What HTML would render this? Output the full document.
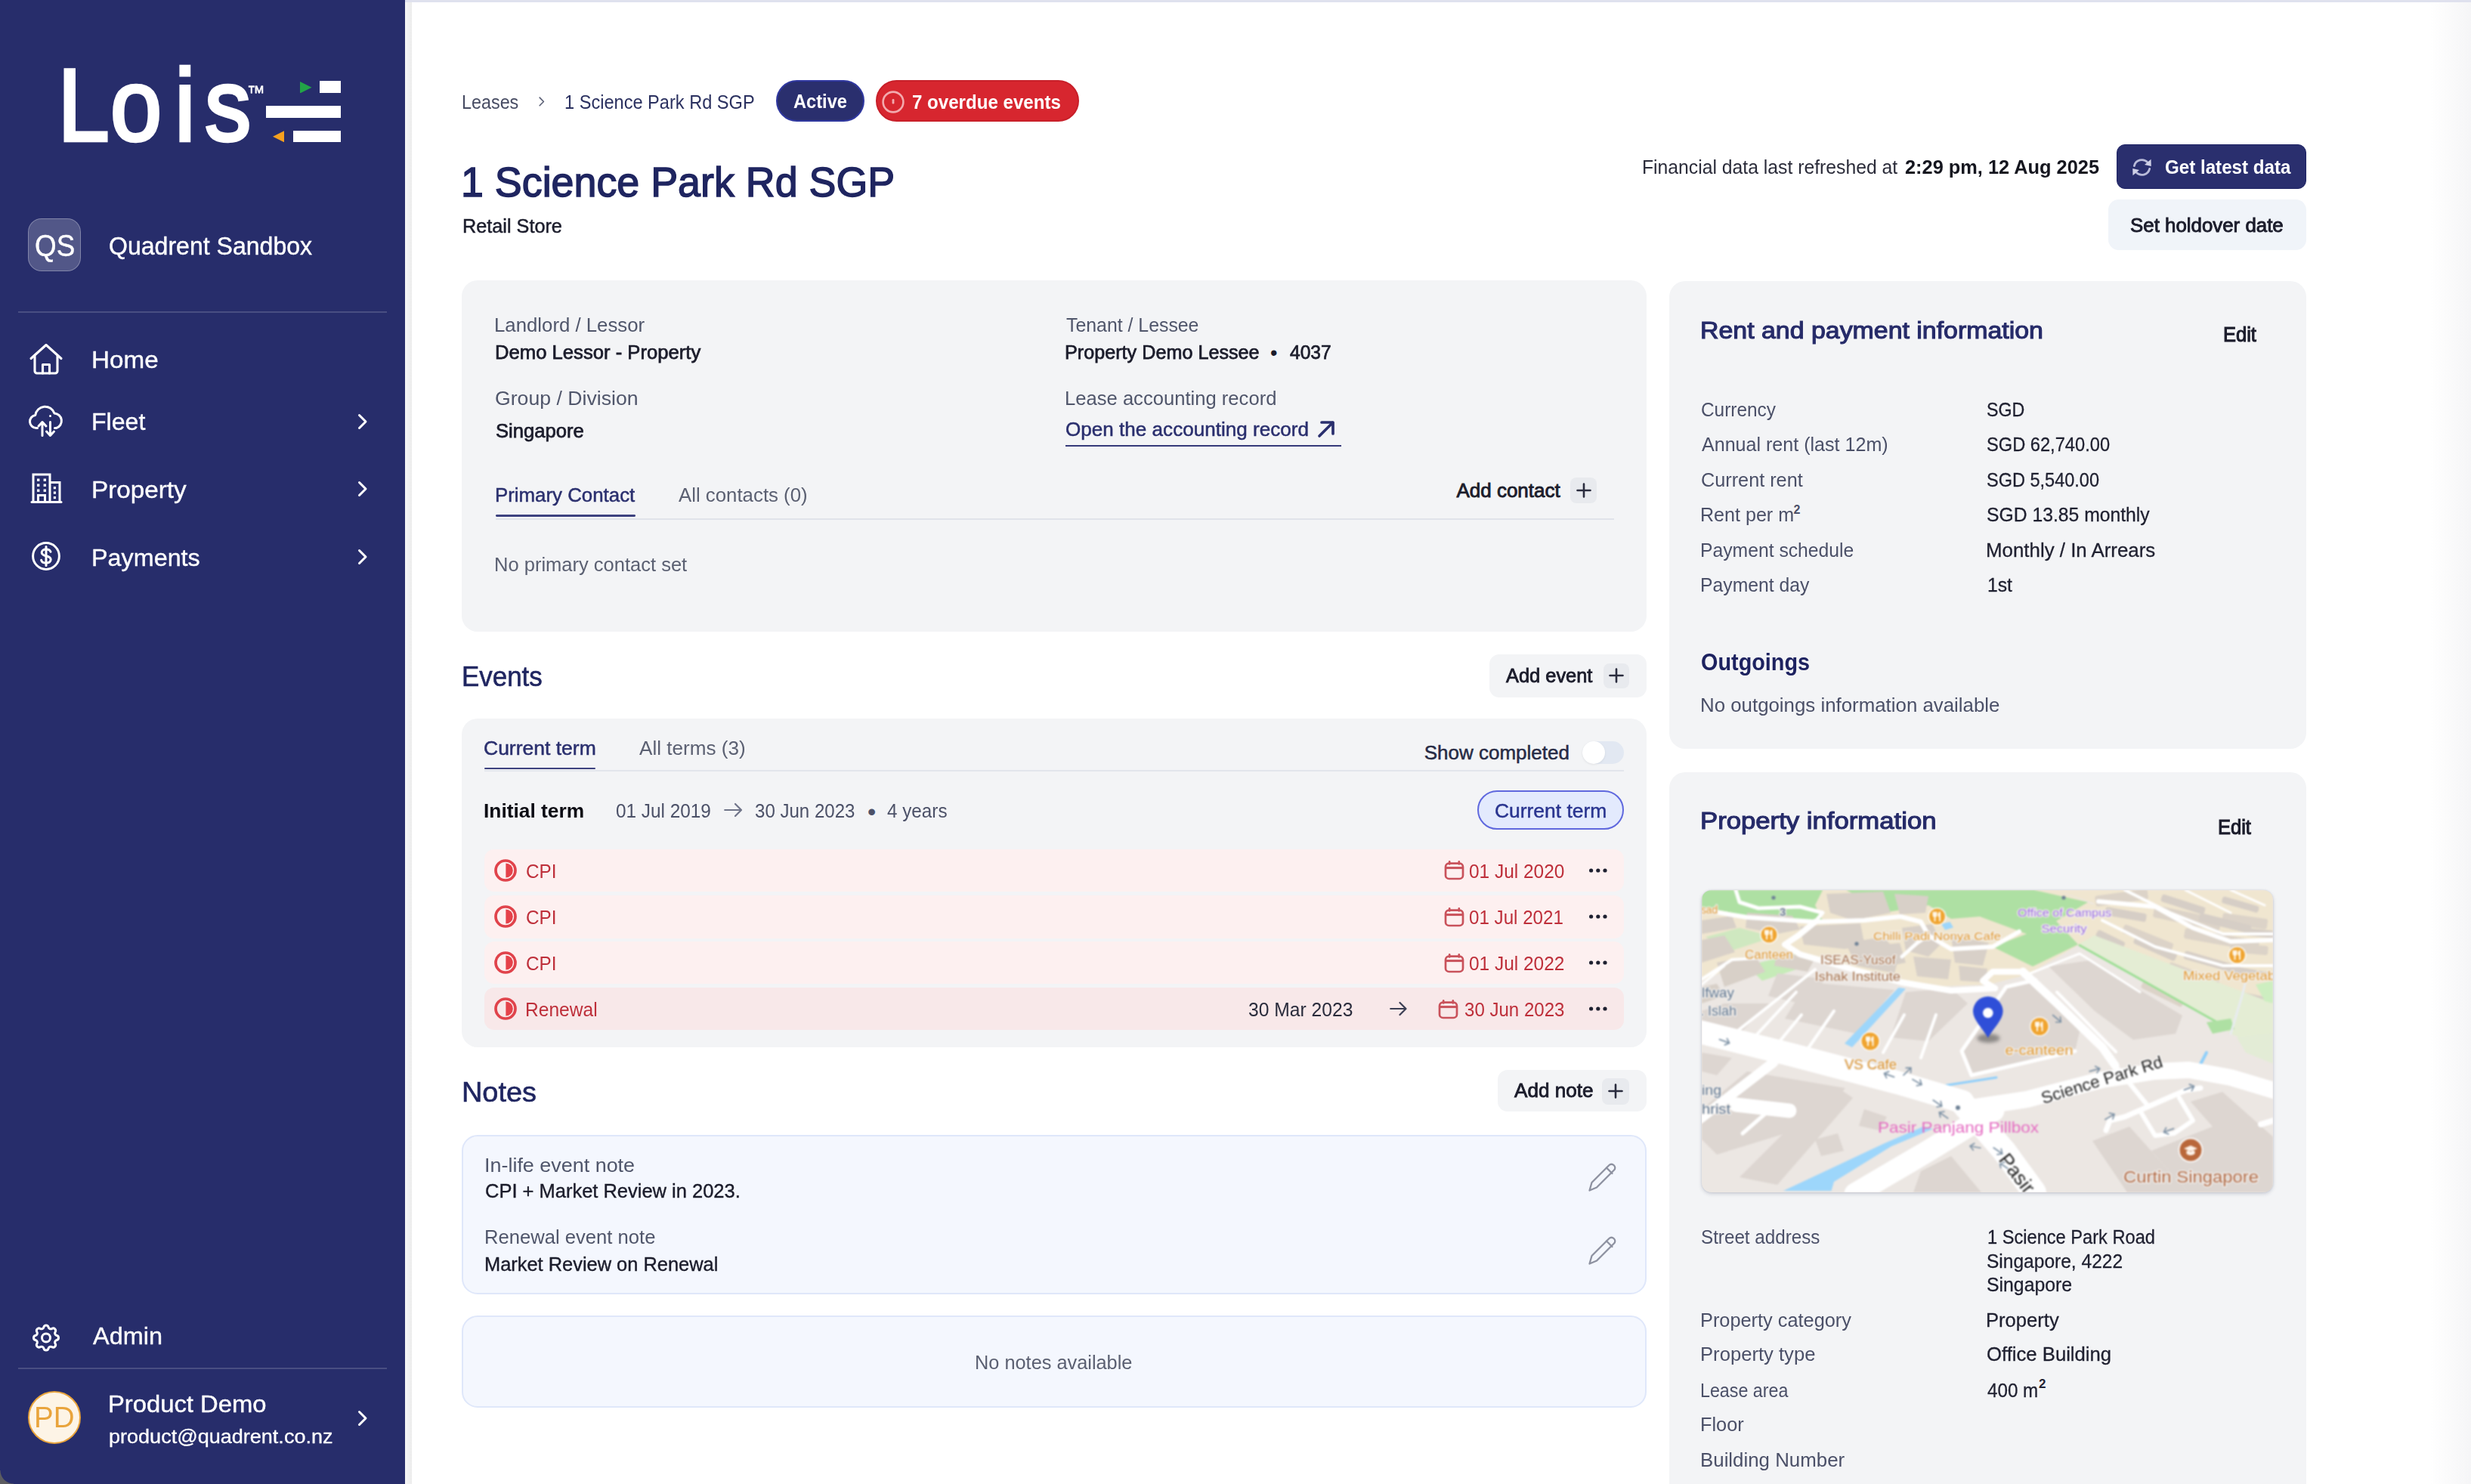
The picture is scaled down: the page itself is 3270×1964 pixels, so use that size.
<!DOCTYPE html>
<html lang="en"><head><meta charset="utf-8"><title>1 Science Park Rd SGP - Lois</title>
<style>
*{margin:0;padding:0;box-sizing:border-box}
html,body{width:3270px;height:1964px;overflow:hidden;background:#fff}
body{position:relative;font-family:"Liberation Sans",sans-serif;}
.t{position:absolute;white-space:nowrap;line-height:1;transform-origin:0 50%;display:block}
.b{position:absolute;display:block}
</style></head>
<body>
<aside>
<div class="b" style="left:0.0px;top:0.0px;width:536.0px;height:1964.0px;background:#272d6b;border-radius:0px;"></div>
<div class="b" style="left:536.0px;top:2.0px;width:8.5px;height:1962.0px;background:linear-gradient(90deg,#f6f6f6 0%,#ececec 100%);border-radius:0px;"></div>
<div class="b" style="left:536.0px;top:0.0px;width:2734.0px;height:2.5px;background:#dfe1ee;border-radius:0px;"></div>
<div class="b" style="left:3215.0px;top:2.5px;width:55.0px;height:1961.5px;background:linear-gradient(90deg,rgba(255,255,255,0) 0%,rgba(120,120,140,0.07) 100%);border-radius:0px;"></div>
<div class="b" style="left:0;top:1946px;width:18px;height:18px;background:radial-gradient(circle at 18px 0px, rgba(0,0,0,0) 17px, #5c5c60 18px)"></div>
<svg class="b" style="left:0;top:60px" width="420" height="160" viewBox="0 0 420 160"><text transform="scale(0.9 1)" x="85 162.2 257 301" y="126.5" font-family="Liberation Sans, sans-serif" font-size="136" fill="#fff" stroke="#fff" stroke-width="4.4" stroke-linejoin="miter">Lois</text></svg>
<span class="t" style="left:327.3px;top:110.0px;font-size:25px;color:#ffffff;-webkit-text-stroke:0.5px #ffffff;transform:scaleX(0.9524);">™</span>
<div class="b" style="left:423.0px;top:107.0px;width:28.0px;height:16.0px;background:#ffffff;border-radius:0px;"></div>
<div class="b" style="left:352.0px;top:140.0px;width:99.0px;height:16.0px;background:#ffffff;border-radius:0px;"></div>
<div class="b" style="left:388.0px;top:172.5px;width:63.0px;height:15.5px;background:#ffffff;border-radius:0px;"></div>
<svg class="b" style="left:397.0px;top:107.5px;" width="15.5" height="15.5" viewBox="0 0 10 10"><polygon points="0,0 10,5 0,10" fill="#22a447"/></svg>
<svg class="b" style="left:360.5px;top:172.5px;" width="15.5" height="15.5" viewBox="0 0 10 10"><polygon points="10,0 0,5 10,10" fill="#f5a01f"/></svg>
<div class="b" style="left:37.0px;top:289.0px;width:70.0px;height:70.0px;background:rgba(255,255,255,0.2);border-radius:18px;border:1.5px solid rgba(255,255,255,0.28);"></div>
<span class="t" style="left:45.9px;top:304.7px;font-size:41px;color:#ffffff;-webkit-text-stroke:0.4px #ffffff;transform:scaleX(0.8982);">QS</span>
<span class="t" style="left:144.3px;top:308.5px;font-size:33px;color:#ffffff;-webkit-text-stroke:0.4px #ffffff;transform:scaleX(0.9713);">Quadrent Sandbox</span>
<div class="b" style="left:24.0px;top:412.0px;width:488.0px;height:2.0px;background:rgba(255,255,255,0.16);border-radius:0px;"></div>
<svg class="b" style="left:38.0px;top:453.0px;" width="46.0" height="44.0" viewBox="0 0 46 44"><g fill="none" stroke="#fff" stroke-width="3.1" stroke-linecap="round" stroke-linejoin="round"><path d="M3 21.5 L23 3.5 L43 21.5"/><path d="M8 18.5 V38 a3 3 0 0 0 3 3 H35 a3 3 0 0 0 3 -3 V18.5"/><path d="M18.5 41 V29.5 H27.5 V41"/></g></svg>
<span class="t" style="left:121.1px;top:460.6px;font-size:31px;color:#ffffff;-webkit-text-stroke:0.35px #ffffff;transform:scaleX(1.0717);">Home</span>
<svg class="b" style="left:37.0px;top:535.0px;" width="48.0" height="46.0" viewBox="0 0 48 46"><g fill="none" stroke="#fff" stroke-width="3" stroke-linecap="round" stroke-linejoin="round"><path d="M12.5 31.5 H11 a8.6 8.6 0 0 1 -1.2 -17.1 a13 13 0 0 1 25.2 -2.4 a10 10 0 0 1 2.5 19.5 H35.5"/><path d="M19 41.5 V24 M14 29 L19 23.5 L24 29"/><path d="M29.5 23.5 V41 M24.5 36 L29.5 41.5 L34.5 36"/><path d="M29.5 15.5 V15.6"/></g></svg>
<span class="t" style="left:121.2px;top:542.6px;font-size:31px;color:#ffffff;-webkit-text-stroke:0.35px #ffffff;transform:scaleX(1.0348);">Fleet</span>
<svg class="b" style="left:472.0px;top:545.5px;" width="16.0" height="24.0" viewBox="0 0 16 24"><path d="M3.5 3.5 L12 12 L3.5 20.5" fill="none" stroke="#ffffff" stroke-width="3" stroke-linecap="round" stroke-linejoin="round"/></svg>
<svg class="b" style="left:39.0px;top:624.0px;" width="45.0" height="44.0" viewBox="0 0 45 44"><g fill="none" stroke="#fff" stroke-width="3" stroke-linecap="butt" stroke-linejoin="miter"><path d="M5 40 V4 H27 V40"/><path d="M27 14.5 H40 V40"/><path d="M3 40.5 H42" stroke-linecap="round"/><path d="M11.5 40 V31.5 H20.5 V40"/></g><g fill="#fff"><rect x="10" y="9.5" width="3.4" height="3.4"/><rect x="18.6" y="9.5" width="3.4" height="3.4"/><rect x="10" y="16.5" width="3.4" height="3.4"/><rect x="18.6" y="16.5" width="3.4" height="3.4"/><rect x="10" y="23.5" width="3.4" height="3.4"/><rect x="18.6" y="23.5" width="3.4" height="3.4"/><rect x="31.8" y="20" width="3.2" height="3.2"/><rect x="31.8" y="26.5" width="3.2" height="3.2"/><rect x="31.8" y="33" width="3.2" height="3.2"/></g></svg>
<span class="t" style="left:121.1px;top:632.6px;font-size:31px;color:#ffffff;-webkit-text-stroke:0.35px #ffffff;transform:scaleX(1.0734);">Property</span>
<svg class="b" style="left:472.0px;top:634.5px;" width="16.0" height="24.0" viewBox="0 0 16 24"><path d="M3.5 3.5 L12 12 L3.5 20.5" fill="none" stroke="#ffffff" stroke-width="3" stroke-linecap="round" stroke-linejoin="round"/></svg>
<svg class="b" style="left:39.0px;top:714.0px;" width="44.0" height="44.0" viewBox="0 0 44 44"><g fill="none" stroke="#fff" stroke-width="3" stroke-linecap="round" stroke-linejoin="round"><circle cx="22" cy="22" r="17.4"/><path d="M28 16.3 c-0.8 -2.2 -3 -3.3 -6 -3.3 c-3.4 0 -5.8 1.7 -5.8 4.3 c0 6 12 3 12 9.3 c0 2.8 -2.6 4.5 -6.2 4.5 c-3.3 0 -5.7 -1.3 -6.4 -3.8"/><path d="M22 9.5 V34.5"/></g></svg>
<span class="t" style="left:121.2px;top:722.6px;font-size:31px;color:#ffffff;-webkit-text-stroke:0.35px #ffffff;transform:scaleX(1.0430);">Payments</span>
<svg class="b" style="left:472.0px;top:724.5px;" width="16.0" height="24.0" viewBox="0 0 16 24"><path d="M3.5 3.5 L12 12 L3.5 20.5" fill="none" stroke="#ffffff" stroke-width="3" stroke-linecap="round" stroke-linejoin="round"/></svg>
<svg class="b" style="left:39.0px;top:1747.5px;" width="44.0" height="45.0" viewBox="0 0 24 24"><g fill="none" stroke="#fff" stroke-width="1.65" stroke-linecap="round" stroke-linejoin="round"><path d="M10.325 4.317c.426 -1.756 2.924 -1.756 3.35 0a1.724 1.724 0 0 0 2.573 1.066c1.543 -.94 3.31 .826 2.37 2.37a1.724 1.724 0 0 0 1.065 2.572c1.756 .426 1.756 2.924 0 3.35a1.724 1.724 0 0 0 -1.066 2.573c.94 1.543 -.826 3.31 -2.37 2.37a1.724 1.724 0 0 0 -2.572 1.065c-.426 1.756 -2.924 1.756 -3.35 0a1.724 1.724 0 0 0 -2.573 -1.066c-1.543 .94 -3.31 -.826 -2.37 -2.37a1.724 1.724 0 0 0 -1.065 -2.572c-1.756 -.426 -1.756 -2.924 0 -3.35a1.724 1.724 0 0 0 1.066 -2.573c-.94 -1.543 .826 -3.31 2.37 -2.37c1 .608 2.296 .07 2.572 -1.065z"/><circle cx="12" cy="12" r="3"/></g></svg>
<span class="t" style="left:123.3px;top:1752.6px;font-size:31px;color:#ffffff;-webkit-text-stroke:0.35px #ffffff;transform:scaleX(1.0464);">Admin</span>
<div class="b" style="left:24.0px;top:1810.0px;width:488.0px;height:2.0px;background:rgba(255,255,255,0.16);border-radius:0px;"></div>
<div class="b" style="left:37.0px;top:1841.0px;width:70.0px;height:70.0px;background:#fdf4e6;border-radius:35px;border:2.5px solid #e9a43c;"></div>
<span class="t" style="left:44.5px;top:1857.3px;font-size:38px;color:#e9a43c;transform:scaleX(1.0135);">PD</span>
<span class="t" style="left:142.8px;top:1841.9px;font-size:32px;color:#ffffff;-webkit-text-stroke:0.4px #ffffff;transform:scaleX(1.0241);">Product Demo</span>
<span class="t" style="left:143.7px;top:1888.1px;font-size:26.5px;color:#ffffff;-webkit-text-stroke:0.3px #ffffff;transform:scaleX(1.0203);">product@quadrent.co.nz</span>
<svg class="b" style="left:472.0px;top:1864.5px;" width="16.0" height="24.0" viewBox="0 0 16 24"><path d="M3.5 3.5 L12 12 L3.5 20.5" fill="none" stroke="#ffffff" stroke-width="3" stroke-linecap="round" stroke-linejoin="round"/></svg>
</aside>
<main>
<section>
<span class="t" style="left:611.4px;top:121.5px;font-size:26px;color:#474c63;transform:scaleX(0.8981);">Leases</span>
<svg class="b" style="left:711.5px;top:127.1px;" width="9.9" height="14.9" viewBox="0 0 16 24"><path d="M3.5 3.5 L12 12 L3.5 20.5" fill="none" stroke="#5a5f75" stroke-width="2.6" stroke-linecap="round" stroke-linejoin="round"/></svg>
<span class="t" style="left:746.6px;top:121.5px;font-size:26px;color:#2b3160;transform:scaleX(0.9069);">1 Science Park Rd SGP</span>
<div class="b" style="left:1026.5px;top:105.5px;width:117.0px;height:55.5px;background:#2a2f6e;border-radius:28px;border:2px solid #3038a0;"></div>
<span class="t" style="left:1050.0px;top:120.5px;font-size:26px;color:#fff;font-weight:700;transform:scaleX(0.9088);">Active</span>
<div class="b" style="left:1159.0px;top:105.5px;width:268.5px;height:55.5px;background:#d7262f;border-radius:28px;border:2px solid #c81f29;"></div>
<svg class="b" style="left:1166.0px;top:119.0px;" width="32.0" height="32.0" viewBox="0 0 32 32"><circle cx="16" cy="16" r="13.4" fill="none" stroke="#f3a9ad" stroke-width="2.6"/><rect x="14.6" y="12" width="2.8" height="6.5" rx="1.2" fill="#f3a9ad"/></svg>
<span class="t" style="left:1207.1px;top:121.5px;font-size:26px;color:#fff;font-weight:700;transform:scaleX(0.9267);">7 overdue events</span>
<span class="t" style="left:610.3px;top:213.1px;font-size:56px;color:#1f2560;-webkit-text-stroke:1.5px #1f2560;transform:scaleX(0.9607);">1 Science Park Rd SGP</span>
<span class="t" style="left:611.5px;top:286.0px;font-size:26px;color:#1b1c2b;-webkit-text-stroke:0.5px #1b1c2b;transform:scaleX(0.9709);">Retail Store</span>
<span class="t" style="left:2172.6px;top:208.0px;font-size:26px;color:#2b2c3a;transform:scaleX(0.9511);">Financial data last refreshed at</span>
<span class="t" style="left:2520.5px;top:208.0px;font-size:26px;color:#15161f;font-weight:700;transform:scaleX(0.9754);">2:29 pm, 12 Aug 2025</span>
<div class="b" style="left:2801.0px;top:191.0px;width:250.5px;height:58.5px;background:#2a2f6e;border-radius:11px;border:1.5px solid #1d2264;"></div>
<svg class="b" style="left:2820.5px;top:208.0px;" width="27.0" height="27.0" viewBox="0 0 26 26"><g fill="none" stroke="#b9bbd9" stroke-width="2.7" stroke-linecap="round"><path d="M3.2 11.2 A10 10 0 0 1 20.2 6.6"/><path d="M22.8 14.8 A10 10 0 0 1 5.8 19.4"/></g><polygon points="24.6,2.6 24.8,11.6 16.4,9.6" fill="#cfd0e6"/><polygon points="1.4,23.4 1.2,14.4 9.6,16.4" fill="#cfd0e6"/></svg>
<span class="t" style="left:2865.1px;top:208.0px;font-size:26px;color:#fff;font-weight:700;transform:scaleX(0.9289);">Get latest data</span>
<div class="b" style="left:2790.0px;top:263.5px;width:261.5px;height:67.0px;background:#f0f4f9;border-radius:14px;"></div>
<span class="t" style="left:2819.0px;top:285.0px;font-size:26.5px;color:#1b1c2b;-webkit-text-stroke:0.95px #1b1c2b;transform:scaleX(0.9760);">Set holdover date</span>
<div class="b" style="left:611.0px;top:371.0px;width:1567.5px;height:465.0px;background:#f3f4f6;border-radius:21px;"></div>
<span class="t" style="left:654.2px;top:417.0px;font-size:26px;color:#50566b;transform:scaleX(0.9912);">Landlord / Lessor</span>
<span class="t" style="left:654.6px;top:453.0px;font-size:26px;color:#1b1c2b;-webkit-text-stroke:0.75px #1b1c2b;transform:scaleX(0.9864);">Demo Lessor - Property</span>
<span class="t" style="left:655.2px;top:514.0px;font-size:26px;color:#50566b;transform:scaleX(1.0247);">Group / Division</span>
<span class="t" style="left:655.6px;top:557.0px;font-size:26px;color:#1b1c2b;-webkit-text-stroke:0.75px #1b1c2b;transform:scaleX(0.9844);">Singapore</span>
<span class="t" style="left:1410.5px;top:417.0px;font-size:26px;color:#50566b;transform:scaleX(0.9557);">Tenant / Lessee</span>
<span class="t" style="left:1408.9px;top:453.0px;font-size:26px;color:#1b1c2b;-webkit-text-stroke:0.75px #1b1c2b;transform:scaleX(0.9689);">Property Demo Lessee</span>
<span class="t" style="left:1681.0px;top:454.1px;font-size:27px;color:#1b1c2b;">•</span>
<span class="t" style="left:1706.9px;top:453.0px;font-size:26px;color:#1b1c2b;-webkit-text-stroke:0.75px #1b1c2b;transform:scaleX(0.9455);">4037</span>
<span class="t" style="left:1408.5px;top:514.0px;font-size:26px;color:#50566b;transform:scaleX(0.9848);">Lease accounting record</span>
<span class="t" style="left:1409.7px;top:555.0px;font-size:26px;color:#2a2f6e;-webkit-text-stroke:0.5px #2a2f6e;transform:scaleX(1.0034);">Open the accounting record</span>
<svg class="b" style="left:1742.0px;top:555.0px;" width="26.0" height="26.0" viewBox="0 0 26 26"><g fill="none" stroke="#2a2f6e" stroke-width="3.7" stroke-linecap="round" stroke-linejoin="round"><path d="M4 22 L21.5 4.5"/><path d="M7 4 H22 V19"/></g></svg>
<div class="b" style="left:1410.0px;top:589.0px;width:365.0px;height:2.4px;background:#353a7a;border-radius:0px;"></div>
<span class="t" style="left:654.5px;top:642.0px;font-size:26px;color:#2a2f6e;-webkit-text-stroke:0.5px #2a2f6e;transform:scaleX(0.9938);">Primary Contact</span>
<div class="b" style="left:655.5px;top:681.2px;width:185.0px;height:2.8px;background:#3d427f;border-radius:1.4px;"></div>
<span class="t" style="left:898.0px;top:642.0px;font-size:26px;color:#5b6072;transform:scaleX(0.9925);">All contacts (0)</span>
<div class="b" style="left:655.5px;top:685.5px;width:1480.5px;height:2.3px;background:#e0e3ea;border-radius:0px;"></div>
<span class="t" style="left:1927.4px;top:636.0px;font-size:26px;color:#1b1c2b;-webkit-text-stroke:0.85px #1b1c2b;">Add contact</span>
<div class="b" style="left:2078.0px;top:632.0px;width:35.0px;height:34.0px;background:#e8eaee;border-radius:8px;"></div>
<svg class="b" style="left:2085.5px;top:639.0px;" width="20.0" height="20.0" viewBox="0 0 20 20"><path d="M10 1.5 V18.5 M1.5 10 H18.5" stroke="#2a2c3e" stroke-width="2.6" stroke-linecap="round"/></svg>
<span class="t" style="left:654.2px;top:734.0px;font-size:26px;color:#5b6072;transform:scaleX(0.9812);">No primary contact set</span>
<span class="t" style="left:610.9px;top:876.7px;font-size:37px;color:#1f2560;-webkit-text-stroke:0.6px #1f2560;transform:scaleX(0.9433);">Events</span>
<div class="b" style="left:1970.5px;top:866.0px;width:208.0px;height:57.0px;background:#f3f4f6;border-radius:13px;"></div>
<span class="t" style="left:1993.4px;top:881.0px;font-size:26px;color:#1b1c2b;-webkit-text-stroke:0.85px #1b1c2b;transform:scaleX(0.9770);">Add event</span>
<div class="b" style="left:2121.5px;top:877.5px;width:34.5px;height:33.5px;background:#e8eaee;border-radius:8px;"></div>
<svg class="b" style="left:2128.8px;top:884.2px;" width="20.0" height="20.0" viewBox="0 0 20 20"><path d="M10 1.5 V18.5 M1.5 10 H18.5" stroke="#2a2c3e" stroke-width="2.6" stroke-linecap="round"/></svg>
<div class="b" style="left:611.0px;top:951.0px;width:1567.5px;height:435.0px;background:#f3f4f6;border-radius:21px;"></div>
<span class="t" style="left:639.7px;top:976.5px;font-size:26px;color:#2a2f6e;-webkit-text-stroke:0.5px #2a2f6e;transform:scaleX(1.0191);">Current term</span>
<div class="b" style="left:640.5px;top:1015.7px;width:147.0px;height:2.8px;background:#3d427f;border-radius:1.4px;"></div>
<span class="t" style="left:846.0px;top:976.5px;font-size:26px;color:#5b6072;transform:scaleX(1.0039);">All terms (3)</span>
<div class="b" style="left:640.5px;top:1018.5px;width:1508.5px;height:2.0px;background:#e2e5ec;border-radius:0px;"></div>
<span class="t" style="left:1884.7px;top:983.0px;font-size:26px;color:#272b45;-webkit-text-stroke:0.5px #272b45;">Show completed</span>
<div class="b" style="left:2094.0px;top:981.0px;width:55.0px;height:30.0px;background:#e2e8f2;border-radius:16px;"></div>
<div class="b" style="left:2094.0px;top:980.5px;width:30.0px;height:30.0px;background:#ffffff;border-radius:15px;box-shadow:0 1px 3px rgba(0,0,0,0.08);"></div>
<span class="t" style="left:639.5px;top:1059.5px;font-size:26px;color:#0c0c14;font-weight:700;transform:scaleX(1.0127);">Initial term</span>
<span class="t" style="left:814.6px;top:1059.5px;font-size:26px;color:#4c5168;transform:scaleX(0.9362);">01 Jul 2019</span>
<svg class="b" style="left:958.0px;top:1061.5px;" width="24.5" height="20.0" viewBox="0 0 24.5 20"><path d="M1.2 10 H22.9 M15.0 2 L23.0 10 L15.0 18" fill="none" stroke="#6f7489" stroke-width="2.2" stroke-linecap="round" stroke-linejoin="round"/></svg>
<span class="t" style="left:999.0px;top:1059.5px;font-size:26px;color:#4c5168;transform:scaleX(0.9252);">30 Jun 2023</span>
<span class="t" style="left:1148.0px;top:1058.4px;font-size:32px;color:#4c5168;">•</span>
<span class="t" style="left:1174.0px;top:1059.5px;font-size:26px;color:#4c5168;transform:scaleX(0.9324);">4 years</span>
<div class="b" style="left:1955.0px;top:1046.0px;width:194.0px;height:51.5px;background:#e3eafd;border-radius:26px;border:2.6px solid #5f68de;"></div>
<span class="t" style="left:1978.2px;top:1059.5px;font-size:26px;color:#29348f;-webkit-text-stroke:0.45px #29348f;transform:scaleX(1.0160);">Current term</span>
<div class="b" style="left:640.5px;top:1123.5px;width:1508.5px;height:56.5px;background:#fdf0f0;border-radius:13px;"></div>
<svg class="b" style="left:652.5px;top:1135.8px;" width="32.0" height="32.0" viewBox="0 0 32 32"><circle cx="16" cy="16" r="13" fill="none" stroke="#e0434b" stroke-width="3.7"/><path d="M16.4 6.6 A9.4 9.4 0 0 1 16.4 25.4 Z" fill="#e5424a"/></svg>
<span class="t" style="left:696.1px;top:1139.5px;font-size:26px;color:#be2f3a;transform:scaleX(0.9347);">CPI</span>
<svg class="b" style="left:1911.0px;top:1139.2px;" width="27.0" height="26.0" viewBox="0 0 27 26"><g fill="none" stroke="#c9525b" stroke-width="2.7" stroke-linejoin="round"><rect x="2" y="3.6" width="23" height="20.4" rx="4.6"/><path d="M2 9.6 H25" stroke-width="3"/><path d="M7.2 1.4 V4.5 M19.8 1.4 V4.5" stroke-linecap="round"/></g></svg>
<span class="t" style="left:1944.1px;top:1139.5px;font-size:26px;color:#be2f3a;transform:scaleX(0.9400);">01 Jul 2020</span>
<svg class="b" style="left:2101.5px;top:1147.8px;" width="26.0" height="8.0" viewBox="0 0 26 8"><circle cx="3.6" cy="4" r="2.6" fill="#1e2030"/><circle cx="12.8" cy="4" r="2.6" fill="#1e2030"/><circle cx="22" cy="4" r="2.6" fill="#1e2030"/></svg>
<div class="b" style="left:640.5px;top:1184.5px;width:1508.5px;height:57.0px;background:#fdf0f0;border-radius:13px;"></div>
<svg class="b" style="left:652.5px;top:1197.0px;" width="32.0" height="32.0" viewBox="0 0 32 32"><circle cx="16" cy="16" r="13" fill="none" stroke="#e0434b" stroke-width="3.7"/><path d="M16.4 6.6 A9.4 9.4 0 0 1 16.4 25.4 Z" fill="#e5424a"/></svg>
<span class="t" style="left:696.1px;top:1200.8px;font-size:26px;color:#be2f3a;transform:scaleX(0.9347);">CPI</span>
<svg class="b" style="left:1911.0px;top:1200.5px;" width="27.0" height="26.0" viewBox="0 0 27 26"><g fill="none" stroke="#c9525b" stroke-width="2.7" stroke-linejoin="round"><rect x="2" y="3.6" width="23" height="20.4" rx="4.6"/><path d="M2 9.6 H25" stroke-width="3"/><path d="M7.2 1.4 V4.5 M19.8 1.4 V4.5" stroke-linecap="round"/></g></svg>
<span class="t" style="left:1944.1px;top:1200.8px;font-size:26px;color:#be2f3a;transform:scaleX(0.9287);">01 Jul 2021</span>
<svg class="b" style="left:2101.5px;top:1209.0px;" width="26.0" height="8.0" viewBox="0 0 26 8"><circle cx="3.6" cy="4" r="2.6" fill="#1e2030"/><circle cx="12.8" cy="4" r="2.6" fill="#1e2030"/><circle cx="22" cy="4" r="2.6" fill="#1e2030"/></svg>
<div class="b" style="left:640.5px;top:1246.0px;width:1508.5px;height:56.0px;background:#fdf0f0;border-radius:13px;"></div>
<svg class="b" style="left:652.5px;top:1258.0px;" width="32.0" height="32.0" viewBox="0 0 32 32"><circle cx="16" cy="16" r="13" fill="none" stroke="#e0434b" stroke-width="3.7"/><path d="M16.4 6.6 A9.4 9.4 0 0 1 16.4 25.4 Z" fill="#e5424a"/></svg>
<span class="t" style="left:696.1px;top:1261.8px;font-size:26px;color:#be2f3a;transform:scaleX(0.9347);">CPI</span>
<svg class="b" style="left:1911.0px;top:1261.5px;" width="27.0" height="26.0" viewBox="0 0 27 26"><g fill="none" stroke="#c9525b" stroke-width="2.7" stroke-linejoin="round"><rect x="2" y="3.6" width="23" height="20.4" rx="4.6"/><path d="M2 9.6 H25" stroke-width="3"/><path d="M7.2 1.4 V4.5 M19.8 1.4 V4.5" stroke-linecap="round"/></g></svg>
<span class="t" style="left:1944.1px;top:1261.8px;font-size:26px;color:#be2f3a;transform:scaleX(0.9400);">01 Jul 2022</span>
<svg class="b" style="left:2101.5px;top:1270.0px;" width="26.0" height="8.0" viewBox="0 0 26 8"><circle cx="3.6" cy="4" r="2.6" fill="#1e2030"/><circle cx="12.8" cy="4" r="2.6" fill="#1e2030"/><circle cx="22" cy="4" r="2.6" fill="#1e2030"/></svg>
<div class="b" style="left:640.5px;top:1307.0px;width:1508.5px;height:56.0px;background:#f8e8e9;border-radius:13px;"></div>
<svg class="b" style="left:652.5px;top:1319.0px;" width="32.0" height="32.0" viewBox="0 0 32 32"><circle cx="16" cy="16" r="13" fill="none" stroke="#e0434b" stroke-width="3.7"/><path d="M16.4 6.6 A9.4 9.4 0 0 1 16.4 25.4 Z" fill="#e5424a"/></svg>
<span class="t" style="left:695.1px;top:1322.8px;font-size:26px;color:#be2f3a;transform:scaleX(0.9452);">Renewal</span>
<svg class="b" style="left:1903.0px;top:1322.5px;" width="27.0" height="26.0" viewBox="0 0 27 26"><g fill="none" stroke="#c9525b" stroke-width="2.7" stroke-linejoin="round"><rect x="2" y="3.6" width="23" height="20.4" rx="4.6"/><path d="M2 9.6 H25" stroke-width="3"/><path d="M7.2 1.4 V4.5 M19.8 1.4 V4.5" stroke-linecap="round"/></g></svg>
<span class="t" style="left:1937.5px;top:1322.8px;font-size:26px;color:#be2f3a;transform:scaleX(0.9252);">30 Jun 2023</span>
<svg class="b" style="left:2101.5px;top:1331.0px;" width="26.0" height="8.0" viewBox="0 0 26 8"><circle cx="3.6" cy="4" r="2.6" fill="#1e2030"/><circle cx="12.8" cy="4" r="2.6" fill="#1e2030"/><circle cx="22" cy="4" r="2.6" fill="#1e2030"/></svg>
<span class="t" style="left:1652.0px;top:1322.9px;font-size:26px;color:#2a2c3c;transform:scaleX(0.9483);">30 Mar 2023</span>
<svg class="b" style="left:1838.5px;top:1325.0px;" width="23.0" height="20.0" viewBox="0 0 23.0 20"><path d="M1.2 10 H21.4 M13.5 2 L21.5 10 L13.5 18" fill="none" stroke="#3a3d52" stroke-width="2.2" stroke-linecap="round" stroke-linejoin="round"/></svg>
<span class="t" style="left:610.6px;top:1426.7px;font-size:37px;color:#1f2560;-webkit-text-stroke:0.6px #1f2560;transform:scaleX(1.0241);">Notes</span>
<div class="b" style="left:1982.0px;top:1416.0px;width:196.5px;height:55.0px;background:#f3f4f6;border-radius:13px;"></div>
<span class="t" style="left:2004.4px;top:1430.0px;font-size:26px;color:#1b1c2b;-webkit-text-stroke:0.85px #1b1c2b;transform:scaleX(1.0050);">Add note</span>
<div class="b" style="left:2120.0px;top:1427.0px;width:36.0px;height:34.5px;background:#e8eaee;border-radius:8px;"></div>
<svg class="b" style="left:2128.0px;top:1434.2px;" width="20.0" height="20.0" viewBox="0 0 20 20"><path d="M10 1.5 V18.5 M1.5 10 H18.5" stroke="#2a2c3e" stroke-width="2.6" stroke-linecap="round"/></svg>
<div class="b" style="left:611.0px;top:1501.5px;width:1567.5px;height:211.0px;background:#f4f7fe;border-radius:21px;border:2px solid #dfe7fa;"></div>
<span class="t" style="left:641.0px;top:1528.8px;font-size:26px;color:#50566b;transform:scaleX(1.0355);">In-life event note</span>
<span class="t" style="left:642.3px;top:1562.8px;font-size:26px;color:#1b1c2b;-webkit-text-stroke:0.4px #1b1c2b;transform:scaleX(0.9800);">CPI + Market Review in 2023.</span>
<span class="t" style="left:641.1px;top:1623.6px;font-size:26px;color:#50566b;transform:scaleX(0.9852);">Renewal event note</span>
<span class="t" style="left:641.3px;top:1659.6px;font-size:26px;color:#1b1c2b;-webkit-text-stroke:0.4px #1b1c2b;transform:scaleX(0.9774);">Market Review on Renewal</span>
<svg class="b" style="left:2098.5px;top:1538.0px;" width="42.0" height="42.0" viewBox="0 0 42 42"><g fill="none" stroke="#8d91a0" stroke-width="2.3" stroke-linecap="round" stroke-linejoin="round"><path d="M4.5 37.5 L7.5 27 L30.5 4 a4.2 4.2 0 0 1 6 0 l0.5 0.5 a4.2 4.2 0 0 1 0 6 L14 33.5 Z"/><path d="M27 7.5 L34.5 15"/></g></svg>
<svg class="b" style="left:2098.5px;top:1635.0px;" width="42.0" height="42.0" viewBox="0 0 42 42"><g fill="none" stroke="#8d91a0" stroke-width="2.3" stroke-linecap="round" stroke-linejoin="round"><path d="M4.5 37.5 L7.5 27 L30.5 4 a4.2 4.2 0 0 1 6 0 l0.5 0.5 a4.2 4.2 0 0 1 0 6 L14 33.5 Z"/><path d="M27 7.5 L34.5 15"/></g></svg>
<div class="b" style="left:611.0px;top:1741.0px;width:1567.5px;height:122.0px;background:#f4f7fe;border-radius:21px;border:2px solid #dfe7fa;"></div>
<span class="t" style="left:1290.1px;top:1790.0px;font-size:26px;color:#5b6072;transform:scaleX(0.9742);">No notes available</span>
</section>
<section>
<div class="b" style="left:2208.5px;top:371.5px;width:843.0px;height:619.5px;background:#f3f4f6;border-radius:21px;"></div>
<span class="t" style="left:2250.4px;top:421.8px;font-size:31px;color:#262b69;-webkit-text-stroke:1.1px #262b69;transform:scaleX(1.0931);">Rent and payment information</span>
<span class="t" style="left:2941.7px;top:429.2px;font-size:27.5px;color:#1b1c2b;-webkit-text-stroke:1.1px #1b1c2b;transform:scaleX(0.9269);">Edit</span>
<span class="t" style="left:2250.6px;top:528.9px;font-size:26px;color:#4b5068;transform:scaleX(0.9380);">Currency</span>
<span class="t" style="left:2628.7px;top:528.9px;font-size:26px;color:#1f2030;-webkit-text-stroke:0.3px #1f2030;transform:scaleX(0.8925);">SGD</span>
<span class="t" style="left:2251.5px;top:575.4px;font-size:26px;color:#4b5068;transform:scaleX(0.9642);">Annual rent (last 12m)</span>
<span class="t" style="left:2628.6px;top:575.4px;font-size:26px;color:#1f2030;-webkit-text-stroke:0.3px #1f2030;transform:scaleX(0.9096);">SGD 62,740.00</span>
<span class="t" style="left:2250.5px;top:621.9px;font-size:26px;color:#4b5068;transform:scaleX(0.9711);">Current rent</span>
<span class="t" style="left:2628.6px;top:621.9px;font-size:26px;color:#1f2030;-webkit-text-stroke:0.3px #1f2030;transform:scaleX(0.9044);">SGD 5,540.00</span>
<span class="t" style="left:2249.6px;top:668.4px;font-size:26px;color:#4b5068;transform:scaleX(0.9644);">Rent per m</span>
<span class="t" style="left:2628.6px;top:668.4px;font-size:26px;color:#1f2030;-webkit-text-stroke:0.3px #1f2030;transform:scaleX(0.9505);">SGD 13.85 monthly</span>
<span class="t" style="left:2249.6px;top:714.9px;font-size:26px;color:#4b5068;transform:scaleX(0.9506);">Payment schedule</span>
<span class="t" style="left:2627.6px;top:714.9px;font-size:26px;color:#1f2030;-webkit-text-stroke:0.3px #1f2030;transform:scaleX(0.9949);">Monthly / In Arrears</span>
<span class="t" style="left:2249.6px;top:761.4px;font-size:26px;color:#4b5068;transform:scaleX(0.9516);">Payment day</span>
<span class="t" style="left:2630.0px;top:761.4px;font-size:26px;color:#1f2030;-webkit-text-stroke:0.3px #1f2030;transform:scaleX(0.9489);">1st</span>
<span class="t" style="left:2373.6px;top:666.5px;font-size:16px;color:#4b5068;font-weight:700;">2</span>
<span class="t" style="left:2250.5px;top:860.8px;font-size:31px;color:#1d2260;font-weight:700;transform:scaleX(0.9298);">Outgoings</span>
<span class="t" style="left:2249.5px;top:920.0px;font-size:26px;color:#4b5068;transform:scaleX(0.9938);">No outgoings information available</span>
<div class="b" style="left:2208.5px;top:1021.5px;width:843.0px;height:978.5px;background:#f3f4f6;border-radius:21px;"></div>
<span class="t" style="left:2250.3px;top:1071.3px;font-size:31px;color:#262b69;-webkit-text-stroke:1.1px #262b69;transform:scaleX(1.1197);">Property information</span>
<span class="t" style="left:2934.7px;top:1080.7px;font-size:27.5px;color:#1b1c2b;-webkit-text-stroke:1.1px #1b1c2b;transform:scaleX(0.9269);">Edit</span>
<div class="b" style="left:2251.5px;top:1177.8px;width:756.5px;height:400px;border-radius:13px;overflow:hidden;box-shadow:0 2px 5px rgba(60,70,100,0.22),0 0 2px rgba(60,70,100,0.15);background:#ece7e3"><svg width="756.5" height="400" viewBox="0 0 756.5 400" font-family="Liberation Sans, sans-serif" style="display:block;filter:blur(0.9px)"><defs><filter id="bl" x="-50%" y="-50%" width="200%" height="200%"><feGaussianBlur stdDeviation="2.2"/></filter></defs><rect width="756.5" height="400" fill="#ece7e3"/><polygon points="0.0,0.0 470.0,0.0 520.0,20.0 470.0,45.0 500.0,72.0 430.0,112.0 380.0,125.0 300.0,128.0 250.0,118.0 200.0,105.0 120.0,80.0 60.0,95.0 0.0,120.0" fill="#f0e6d0" /><polygon points="470.0,0.0 756.5,0.0 756.5,200.0 700.0,185.0 500.0,72.0 470.0,45.0 520.0,18.0" fill="#f0e6d0" /><rect x="520" y="8" width="70" height="14" fill="#dcd3c8" transform="rotate(-8 520 8)" rx="3"/><rect x="600" y="20" width="90" height="16" fill="#dcd3c8" transform="rotate(12 600 20)" rx="3"/><rect x="640" y="50" width="100" height="14" fill="#dcd3c8" transform="rotate(10 640 50)" rx="3"/><rect x="560" y="45" width="70" height="12" fill="#dcd3c8" transform="rotate(22 560 45)" rx="3"/><rect x="540" y="75" width="80" height="13" fill="#dcd3c8" transform="rotate(24 540 75)" rx="3"/><rect x="620" y="95" width="70" height="12" fill="#dcd3c8" transform="rotate(20 620 95)" rx="3"/><rect x="690" y="30" width="60" height="14" fill="#dcd3c8" transform="rotate(8 690 30)" rx="3"/><rect x="700" y="70" width="50" height="12" fill="#dcd3c8" transform="rotate(5 700 70)" rx="3"/><rect x="585" y="120" width="60" height="10" fill="#dcd3c8" transform="rotate(26 585 120)" rx="3"/><rect x="535" y="22" width="55" height="11" fill="#d6cec6" transform="rotate(10 535 22)" rx="3"/><rect x="610" y="5" width="60" height="10" fill="#d6cec6" transform="rotate(18 610 5)" rx="3"/><rect x="660" y="30" width="70" height="11" fill="#d6cec6" transform="rotate(14 660 30)" rx="3"/><rect x="720" y="50" width="40" height="10" fill="#d6cec6" transform="rotate(6 720 50)" rx="3"/><rect x="575" y="60" width="60" height="11" fill="#d6cec6" transform="rotate(24 575 60)" rx="3"/><rect x="640" y="80" width="70" height="11" fill="#d6cec6" transform="rotate(16 640 80)" rx="3"/><rect x="700" y="100" width="55" height="11" fill="#d6cec6" transform="rotate(10 700 100)" rx="3"/><rect x="525" y="52" width="40" height="10" fill="#d6cec6" transform="rotate(26 525 52)" rx="3"/><rect x="610" y="108" width="55" height="10" fill="#d6cec6" transform="rotate(24 610 108)" rx="3"/><rect x="665" y="128" width="60" height="10" fill="#d6cec6" transform="rotate(20 665 128)" rx="3"/><rect x="715" y="135" width="40" height="10" fill="#d6cec6" transform="rotate(12 715 135)" rx="3"/><rect x="560" y="92" width="45" height="10" fill="#d6cec6" transform="rotate(28 560 92)" rx="3"/><rect x="690" y="8" width="50" height="9" fill="#d6cec6" transform="rotate(16 690 8)" rx="3"/><polygon points="498.0,72.0 520.0,60.0 756.5,150.0 756.5,215.0 700.0,190.0 684.0,176.0" fill="#e4edd4" /><polygon points="733.0,125.0 756.5,120.0 756.5,150.0 745.0,147.0" fill="#cdeec0" /><polygon points="708.0,195.0 756.5,189.0 756.5,230.0 720.0,215.0" fill="#e3ecd6" /><path d="M500.0 73.0 L684.0 176.0" fill="none" stroke="#9fdf97" stroke-width="3" stroke-linecap="round" stroke-linejoin="round" /><polygon points="668.0,175.0 700.0,170.0 705.0,184.0 676.0,190.0" fill="#aee0a3" /><polygon points="0.0,0.0 160.0,0.0 150.0,20.0 160.0,40.0 90.0,42.0 40.0,30.0 0.0,22.0" fill="#aee0a3" /><polygon points="60.0,100.0 125.0,84.0 140.0,100.0 80.0,120.0" fill="#c6ebb8" /><polygon points="5.0,62.0 50.0,50.0 95.0,62.0 40.0,80.0" fill="#cfe8c0" /><polygon points="191.0,0.0 440.0,0.0 511.0,16.0 469.0,41.0 498.0,72.0 438.0,101.0 385.0,75.0 430.0,58.0 368.0,35.0 330.0,38.0 300.0,20.0 240.0,30.0 215.0,12.0" fill="#aee0a3" /><polygon points="165.0,5.0 240.0,2.0 250.0,30.0 200.0,40.0 170.0,30.0" fill="#d8d0c8" /><polygon points="130.0,48.0 210.0,44.0 215.0,70.0 190.0,78.0 135.0,72.0" fill="#d8d0c8" /><polygon points="190.0,70.0 240.0,62.0 262.0,85.0 255.0,110.0 205.0,100.0" fill="#d8d0c8" /><polygon points="265.0,50.0 305.0,45.0 318.0,70.0 300.0,88.0 270.0,80.0" fill="#d8d0c8" /><polygon points="330.0,60.0 380.0,70.0 372.0,100.0 335.0,96.0" fill="#d8d0c8" /><polygon points="0.0,40.0 40.0,34.0 46.0,50.0 0.0,58.0" fill="#d8d0c8" /><polygon points="20.0,96.0 70.0,86.0 84.0,108.0 30.0,128.0" fill="#d8d0c8" /><polygon points="0.0,128.0 20.0,124.0 30.0,140.0 0.0,150.0" fill="#d8d0c8" /><polygon points="60.0,30.0 120.0,34.0 130.0,52.0 100.0,58.0 58.0,50.0" fill="#d8d0c8" /><polygon points="215.0,75.0 262.0,70.0 270.0,96.0 230.0,104.0" fill="#d8d0c8" /><polygon points="280.0,88.0 330.0,92.0 326.0,118.0 285.0,114.0" fill="#d8d0c8" /><polygon points="340.0,100.0 378.0,104.0 376.0,122.0 342.0,120.0" fill="#d8d0c8" /><polygon points="100.0,82.0 150.0,90.0 140.0,108.0 96.0,100.0" fill="#d8d0c8" /><polygon points="0.0,66.0 30.0,60.0 44.0,82.0 0.0,96.0" fill="#d8d0c8" /><polygon points="255.0,5.0 300.0,8.0 296.0,30.0 262.0,32.0" fill="#d8d0c8" /><polygon points="100.0,110.0 165.0,118.0 130.0,150.0 88.0,140.0" fill="#ddd6d1" /><polygon points="140.0,122.0 255.0,132.0 205.0,190.0 110.0,170.0" fill="#ddd6d1" /><polygon points="30.0,150.0 90.0,150.0 50.0,190.0 0.0,185.0 0.0,160.0" fill="#ddd6d1" /><polygon points="270.0,135.0 330.0,130.0 352.0,150.0 300.0,200.0 250.0,195.0" fill="#ddd6d1" /><polygon points="60.0,240.0 190.0,262.0 150.0,310.0 20.0,350.0 0.0,330.0 0.0,290.0" fill="#ddd6d1" /><polygon points="130.0,300.0 185.0,265.0 200.0,275.0 100.0,390.0 50.0,380.0" fill="#ddd6d1" /><polygon points="215.0,290.0 245.0,300.0 235.0,318.0 208.0,312.0" fill="#ddd6d1" /><polygon points="150.0,330.0 180.0,322.0 188.0,345.0 158.0,352.0" fill="#ddd6d1" /><polygon points="0.0,215.0 40.0,222.0 20.0,245.0 0.0,240.0" fill="#ddd6d1" /><polygon points="459.0,101.0 514.0,93.0 636.0,166.0 627.0,190.0 571.0,198.0 520.0,160.0" fill="#ddd6d1" /><polygon points="647.0,280.0 689.0,267.0 756.5,327.0 756.5,400.0 644.0,400.0 595.0,345.0 676.0,313.0" fill="#ddd6d1" /><polygon points="517.0,332.0 566.0,313.0 644.0,400.0 563.0,400.0" fill="#ddd6d1" /><polygon points="290.0,372.0 330.0,352.0 370.0,400.0 280.0,400.0" fill="#ddd6d1" /><polygon points="344.0,213.0 403.0,128.0 442.0,119.0 500.0,187.0 494.0,213.0 357.0,245.0" fill="#ddd6d1" /><polygon points="260.5,129.0 270.0,130.5 199.0,208.0 189.0,203.0" fill="#9dd6fb" /><polygon points="293.0,313.0 241.0,335.5 108.0,398.0 171.5,398.0 175.0,386.0 251.0,339.0 306.0,316.0" fill="#9dd6fb" /><polygon points="317.0,44.7 328.5,42.0 333.0,49.5 322.0,52.8" fill="#9dd6fb" /><path d="M300.0 262.0 L390.0 248.0" fill="none" stroke="#8fcffb" stroke-width="3" stroke-linecap="round" stroke-linejoin="round" /><path d="M655.0 240.0 L668.0 215.0" fill="none" stroke="#8fcffb" stroke-width="4" stroke-linecap="round" stroke-linejoin="round" /><path d="M0.0 26.0 L60.0 36.0 L150.0 42.0 L215.0 40.0 L263.0 35.0 L290.0 42.0 L300.0 60.0 L330.0 78.0 L385.0 75.0 L420.0 55.0" fill="none" stroke="#fff" stroke-width="6" stroke-linecap="round" stroke-linejoin="round" /><path d="M45.0 0.0 L50.0 16.0 L75.0 24.0 L130.0 22.0 L160.0 30.0 L150.0 42.0" fill="none" stroke="#fff" stroke-width="5" stroke-linecap="round" stroke-linejoin="round" /><path d="M150.0 42.0 L128.0 60.0 L110.0 72.0 L130.0 85.0 L200.0 105.0 L264.0 122.0 L330.0 133.0 L388.0 130.0" fill="none" stroke="#fff" stroke-width="8" stroke-linecap="round" stroke-linejoin="round" /><path d="M388.0 130.0 L372.0 120.0 L385.0 108.0 L425.0 108.0" fill="none" stroke="#fff" stroke-width="8" stroke-linecap="round" stroke-linejoin="round" /><path d="M265.0 88.0 L285.0 70.0 L300.0 60.0" fill="none" stroke="#fff" stroke-width="5" stroke-linecap="round" stroke-linejoin="round" /><path d="M0.0 118.0 L40.0 92.0 L75.0 90.0" fill="none" stroke="#fff" stroke-width="4" stroke-linecap="round" stroke-linejoin="round" /><path d="M525.0 15.0 L600.0 22.0 L650.0 50.0 L700.0 68.0 L756.5 66.0" fill="none" stroke="#fff" stroke-width="6" stroke-linecap="round" stroke-linejoin="round" /><path d="M560.0 0.0 L620.0 30.0 L690.0 58.0 L756.5 58.0" fill="none" stroke="#fff" stroke-width="4" stroke-linecap="round" stroke-linejoin="round" /><path d="M530.0 40.0 L600.0 75.0 L690.0 100.0 L756.5 100.0" fill="none" stroke="#fff" stroke-width="4" stroke-linecap="round" stroke-linejoin="round" /><path d="M640.0 0.0 L700.0 30.0" fill="none" stroke="#fff" stroke-width="3" stroke-linecap="round" stroke-linejoin="round" /><path d="M700.0 0.0 L745.0 20.0" fill="none" stroke="#fff" stroke-width="3" stroke-linecap="round" stroke-linejoin="round" /><path d="M700.0 190.0 L715.0 140.0 L720.0 120.0" fill="none" stroke="#e8ecf0" stroke-width="3" stroke-linecap="round" stroke-linejoin="round" /><path d="M30.0 200.0 L150.0 105.0" fill="none" stroke="#fff" stroke-width="4" stroke-linecap="round" stroke-linejoin="round" /><path d="M60.0 205.0 L125.0 135.0" fill="none" stroke="#fff" stroke-width="4" stroke-linecap="round" stroke-linejoin="round" /><path d="M95.0 210.0 L132.0 165.0" fill="none" stroke="#fff" stroke-width="4" stroke-linecap="round" stroke-linejoin="round" /><path d="M130.0 225.0 L175.0 160.0" fill="none" stroke="#fff" stroke-width="4" stroke-linecap="round" stroke-linejoin="round" /><path d="M240.0 215.0 L268.0 165.0" fill="none" stroke="#fff" stroke-width="4" stroke-linecap="round" stroke-linejoin="round" /><path d="M290.0 222.0 L310.0 165.0" fill="none" stroke="#fff" stroke-width="4" stroke-linecap="round" stroke-linejoin="round" /><path d="M0.0 125.0 L30.0 100.0" fill="none" stroke="#fff" stroke-width="3" stroke-linecap="round" stroke-linejoin="round" /><path d="M357.0 245.0 L344.0 213.0 L403.0 128.0 L442.0 119.0" fill="none" stroke="#fff" stroke-width="5" stroke-linecap="round" stroke-linejoin="round" /><path d="M357.0 245.0 L494.0 213.0" fill="none" stroke="#fff" stroke-width="5" stroke-linecap="round" stroke-linejoin="round" /><path d="M425.0 108.0 L470.0 150.0 L530.0 208.0 L547.0 232.0" fill="none" stroke="#fff" stroke-width="11" stroke-linecap="round" stroke-linejoin="round" /><path d="M470.0 135.0 L548.0 214.0" fill="none" stroke="#fff" stroke-width="4" stroke-linecap="round" stroke-linejoin="round" /><path d="M430.0 112.0 L500.0 84.0 L580.0 135.0" fill="none" stroke="#fff" stroke-width="3" stroke-linecap="round" stroke-linejoin="round" /><path d="M547.0 232.0 L590.0 285.0" fill="none" stroke="#fff" stroke-width="6" stroke-linecap="round" stroke-linejoin="round" /><path d="M535.0 318.0 L540.0 305.0 L560.0 300.0 L640.0 265.0 L660.0 262.0" fill="none" stroke="#fff" stroke-width="7" stroke-linecap="round" stroke-linejoin="round" /><path d="M580.0 292.0 L600.0 325.0 L625.0 322.0 L650.0 305.0 L632.0 275.0" fill="none" stroke="#fff" stroke-width="6" stroke-linecap="round" stroke-linejoin="round" /><path d="M-5.0 187.0 L121.0 218.5 L260.0 255.0 L345.0 280.0" fill="none" stroke="#fff" stroke-width="31" stroke-linecap="round" stroke-linejoin="round" /><path d="M350.0 289.0 L430.0 277.0 L530.0 251.0 L600.0 240.0 L645.0 238.0 L700.0 248.0 L760.0 266.0" fill="none" stroke="#fff" stroke-width="22" stroke-linecap="round" stroke-linejoin="round" /><path d="M345.0 282.0 L400.0 345.0 L440.0 400.0" fill="none" stroke="#fff" stroke-width="32" stroke-linecap="round" stroke-linejoin="round" /><path d="M386.0 292.0 L300.0 345.0 L203.0 402.0" fill="none" stroke="#fff" stroke-width="29" stroke-linecap="round" stroke-linejoin="round" /><path d="M-5.0 305.0 L95.0 228.0" fill="none" stroke="#fff" stroke-width="13" stroke-linecap="round" stroke-linejoin="round" /><path d="M45.0 284.0 L116.0 292.0" fill="none" stroke="#fff" stroke-width="19" stroke-linecap="round" stroke-linejoin="round" /><path d="M84.0 296.0 L54.0 322.0" fill="none" stroke="#fff" stroke-width="5" stroke-linecap="round" stroke-linejoin="round" /><path d="M740.0 310.0 L756.5 305.0" fill="none" stroke="#fff" stroke-width="8" stroke-linecap="round" stroke-linejoin="round" /><g transform="translate(248 245) rotate(200)"><path d="M-7 0 H7 M2 -4.5 L7 0 L2 4.5" fill="none" stroke="#7f93a6" stroke-width="1.7" stroke-linecap="round" stroke-linejoin="round"/></g><g transform="translate(272 240) rotate(-45)"><path d="M-7 0 H7 M2 -4.5 L7 0 L2 4.5" fill="none" stroke="#7f93a6" stroke-width="1.7" stroke-linecap="round" stroke-linejoin="round"/></g><g transform="translate(285 254) rotate(30)"><path d="M-7 0 H7 M2 -4.5 L7 0 L2 4.5" fill="none" stroke="#7f93a6" stroke-width="1.7" stroke-linecap="round" stroke-linejoin="round"/></g><g transform="translate(312 282) rotate(35)"><path d="M-7 0 H7 M2 -4.5 L7 0 L2 4.5" fill="none" stroke="#7f93a6" stroke-width="1.7" stroke-linecap="round" stroke-linejoin="round"/></g><g transform="translate(320 298) rotate(215)"><path d="M-7 0 H7 M2 -4.5 L7 0 L2 4.5" fill="none" stroke="#7f93a6" stroke-width="1.7" stroke-linecap="round" stroke-linejoin="round"/></g><g transform="translate(362 340) rotate(190)"><path d="M-7 0 H7 M2 -4.5 L7 0 L2 4.5" fill="none" stroke="#7f93a6" stroke-width="1.7" stroke-linecap="round" stroke-linejoin="round"/></g><g transform="translate(392 345) rotate(35)"><path d="M-7 0 H7 M2 -4.5 L7 0 L2 4.5" fill="none" stroke="#7f93a6" stroke-width="1.7" stroke-linecap="round" stroke-linejoin="round"/></g><g transform="translate(400 365) rotate(215)"><path d="M-7 0 H7 M2 -4.5 L7 0 L2 4.5" fill="none" stroke="#7f93a6" stroke-width="1.7" stroke-linecap="round" stroke-linejoin="round"/></g><g transform="translate(520 238) rotate(-15)"><path d="M-7 0 H7 M2 -4.5 L7 0 L2 4.5" fill="none" stroke="#7f93a6" stroke-width="1.7" stroke-linecap="round" stroke-linejoin="round"/></g><g transform="translate(540 300) rotate(-30)"><path d="M-7 0 H7 M2 -4.5 L7 0 L2 4.5" fill="none" stroke="#7f93a6" stroke-width="1.7" stroke-linecap="round" stroke-linejoin="round"/></g><g transform="translate(645 262) rotate(-20)"><path d="M-7 0 H7 M2 -4.5 L7 0 L2 4.5" fill="none" stroke="#7f93a6" stroke-width="1.7" stroke-linecap="round" stroke-linejoin="round"/></g><g transform="translate(618 318) rotate(160)"><path d="M-7 0 H7 M2 -4.5 L7 0 L2 4.5" fill="none" stroke="#7f93a6" stroke-width="1.7" stroke-linecap="round" stroke-linejoin="round"/></g><g transform="translate(30 200) rotate(20)"><path d="M-7 0 H7 M2 -4.5 L7 0 L2 4.5" fill="none" stroke="#7f93a6" stroke-width="1.7" stroke-linecap="round" stroke-linejoin="round"/></g><g transform="translate(470 170) rotate(40)"><path d="M-7 0 H7 M2 -4.5 L7 0 L2 4.5" fill="none" stroke="#7f93a6" stroke-width="1.7" stroke-linecap="round" stroke-linejoin="round"/></g><circle cx="339" cy="288" r="3" fill="#6f8296"/><circle cx="95" cy="10" r="2.6" fill="#6f8296"/><circle cx="205" cy="71" r="2.6" fill="#6f8296"/><circle cx="479" cy="10" r="2.6" fill="#6f8296"/><circle cx="89" cy="59" r="12.1" fill="#fff" opacity="0.85"/><circle cx="89" cy="59" r="10.5" fill="#f0a42f"/><g stroke="#fff8ea" stroke-width="2" stroke-linecap="round" fill="none"><path d="M86 53.5 V64.5 M84 53.5 V57 a2 2 0 0 0 4 0 V53.5"/><path d="M92.5 53.5 V64.5 M92.5 53.5 c-2.2 1.5 -2.2 5 0 6"/></g><circle cx="311.5" cy="35" r="12.1" fill="#fff" opacity="0.85"/><circle cx="311.5" cy="35" r="10.5" fill="#f0a42f"/><g stroke="#fff8ea" stroke-width="2" stroke-linecap="round" fill="none"><path d="M308.5 29.5 V40.5 M306.5 29.5 V33 a2 2 0 0 0 4 0 V29.5"/><path d="M315.0 29.5 V40.5 M315.0 29.5 c-2.2 1.5 -2.2 5 0 6"/></g><circle cx="223" cy="200" r="13.1" fill="#fff" opacity="0.85"/><circle cx="223" cy="200" r="11.5" fill="#f0a42f"/><g stroke="#fff8ea" stroke-width="2" stroke-linecap="round" fill="none"><path d="M220 194.5 V205.5 M218 194.5 V198 a2 2 0 0 0 4 0 V194.5"/><path d="M226.5 194.5 V205.5 M226.5 194.5 c-2.2 1.5 -2.2 5 0 6"/></g><circle cx="447" cy="180.5" r="13.1" fill="#fff" opacity="0.85"/><circle cx="447" cy="180.5" r="11.5" fill="#f0a42f"/><g stroke="#fff8ea" stroke-width="2" stroke-linecap="round" fill="none"><path d="M444 175.0 V186.0 M442 175.0 V178.5 a2 2 0 0 0 4 0 V175.0"/><path d="M450.5 175.0 V186.0 M450.5 175.0 c-2.2 1.5 -2.2 5 0 6"/></g><circle cx="708.5" cy="86" r="12.1" fill="#fff" opacity="0.85"/><circle cx="708.5" cy="86" r="10.5" fill="#f0a42f"/><g stroke="#fff8ea" stroke-width="2" stroke-linecap="round" fill="none"><path d="M705.5 80.5 V91.5 M703.5 80.5 V84 a2 2 0 0 0 4 0 V80.5"/><path d="M712.0 80.5 V91.5 M712.0 80.5 c-2.2 1.5 -2.2 5 0 6"/></g><circle cx="647" cy="344" r="16.5" fill="#fff" opacity="0.85"/><circle cx="647" cy="344" r="14.5" fill="#b9673a"/><path d="M638 342 L647 338 L656 342 L647 346 Z M641.5 345 V349 c3 2.5 8 2.5 11 0 V345" fill="#fdf3ea"/><text x="-1.0" y="31.0" font-size="15" fill="#e19a33" textLength="22.0" lengthAdjust="spacingAndGlyphs" stroke="#f4f1ee" stroke-width="2.6" paint-order="stroke" stroke-linejoin="round">sad</text><text x="57.0" y="91.0" font-size="17" fill="#e19a33" textLength="64.0" lengthAdjust="spacingAndGlyphs" stroke="#f4f1ee" stroke-width="2.6" paint-order="stroke" stroke-linejoin="round">Canteen</text><text x="227.0" y="66.0" font-size="15.5" fill="#e19a33" textLength="169.0" lengthAdjust="spacingAndGlyphs" stroke="#f4f1ee" stroke-width="2.6" paint-order="stroke" stroke-linejoin="round">Chilli Padi Nonya Cafe</text><text x="157.0" y="97.5" font-size="16" fill="#a5714d" textLength="99.5" lengthAdjust="spacingAndGlyphs" stroke="#f4f1ee" stroke-width="2.6" paint-order="stroke" stroke-linejoin="round">ISEAS-Yusof</text><text x="149.5" y="120.0" font-size="16" fill="#a5714d" textLength="113.5" lengthAdjust="spacingAndGlyphs" stroke="#f4f1ee" stroke-width="2.6" paint-order="stroke" stroke-linejoin="round">Ishak Institute</text><text x="418.0" y="35.0" font-size="15" fill="#9a6ce2" textLength="124.0" lengthAdjust="spacingAndGlyphs" stroke="#f4f1ee" stroke-width="2.6" paint-order="stroke" stroke-linejoin="round">Office of Campus</text><text x="449.5" y="55.5" font-size="15" fill="#9a6ce2" textLength="60.0" lengthAdjust="spacingAndGlyphs" stroke="#f4f1ee" stroke-width="2.6" paint-order="stroke" stroke-linejoin="round">Security</text><text x="637.0" y="118.5" font-size="17" fill="#e19a33" textLength="122.0" lengthAdjust="spacingAndGlyphs" stroke="#f4f1ee" stroke-width="2.6" paint-order="stroke" stroke-linejoin="round">Mixed Vegetab</text><text x="401.5" y="217.5" font-size="18.5" fill="#e19a33" textLength="90.0" lengthAdjust="spacingAndGlyphs" stroke="#f4f1ee" stroke-width="2.6" paint-order="stroke" stroke-linejoin="round">e-canteen</text><text x="189.0" y="237.0" font-size="18.5" fill="#dc9430" textLength="69.0" lengthAdjust="spacingAndGlyphs" stroke="#f4f1ee" stroke-width="2.6" paint-order="stroke" stroke-linejoin="round">VS Cafe</text><text x="0.0" y="142.0" font-size="18" fill="#5f7690" textLength="43.0" lengthAdjust="spacingAndGlyphs" stroke="#f4f1ee" stroke-width="2.6" paint-order="stroke" stroke-linejoin="round">lfway</text><text x="-2.0" y="165.5" font-size="18" fill="#5f7690" textLength="48.0" lengthAdjust="spacingAndGlyphs" stroke="#f4f1ee" stroke-width="2.6" paint-order="stroke" stroke-linejoin="round">. Islah</text><text x="0.0" y="271.0" font-size="18" fill="#5f7690" textLength="26.0" lengthAdjust="spacingAndGlyphs" stroke="#f4f1ee" stroke-width="2.6" paint-order="stroke" stroke-linejoin="round">ing</text><text x="0.0" y="296.0" font-size="18" fill="#5f7690" textLength="38.0" lengthAdjust="spacingAndGlyphs" stroke="#f4f1ee" stroke-width="2.6" paint-order="stroke" stroke-linejoin="round">hrist</text><text x="103.0" y="34.0" font-size="15" fill="#6d8096" font-weight="700" stroke="#f4f1ee" stroke-width="2.6" paint-order="stroke" stroke-linejoin="round">3</text><text x="233.0" y="321.0" font-size="21" fill="#e56bc2" textLength="213.0" lengthAdjust="spacingAndGlyphs">Pasir Panjang Pillbox</text><text x="558.0" y="386.5" font-size="22" fill="#b06a45" textLength="179.0" lengthAdjust="spacingAndGlyphs" stroke="#f4f1ee" stroke-width="2.6" paint-order="stroke" stroke-linejoin="round">Curtin Singapore</text><text x="452.0" y="283.0" font-size="22" fill="#1d1d1d" textLength="167.0" lengthAdjust="spacingAndGlyphs" transform="rotate(-17.2 452.0 283.0)" stroke="#ffffff" stroke-width="2.6" paint-order="stroke" stroke-linejoin="round">Science Park Rd</text><text x="392.0" y="357.0" font-size="26" fill="#1d1d1d" transform="rotate(52 392.0 357.0)" stroke="#ffffff" stroke-width="2.6" paint-order="stroke" stroke-linejoin="round">Pasir Panjang Rd</text><ellipse cx="379.5" cy="196" rx="15" ry="6" fill="#4a4a4a" opacity="0.55" filter="url(#bl)"/><path d="M378.8 195.5 C372 183 359 172 359 160.5 a19.8 19.8 0 0 1 39.6 0 C398.6 172 385.6 183 378.8 195.5 Z" fill="#2f4fd8"/><circle cx="378.8" cy="162.5" r="6.8" fill="#fff"/></svg></div>
<span class="t" style="left:2250.6px;top:1623.8px;font-size:26px;color:#4b5068;transform:scaleX(0.9311);">Street address</span>
<span class="t" style="left:2630.0px;top:1623.8px;font-size:26px;color:#1f2030;-webkit-text-stroke:0.3px #1f2030;transform:scaleX(0.9087);">1 Science Park Road</span>
<span class="t" style="left:2628.6px;top:1655.8px;font-size:26px;color:#1f2030;-webkit-text-stroke:0.3px #1f2030;transform:scaleX(0.9437);">Singapore, 4222</span>
<span class="t" style="left:2628.6px;top:1687.3px;font-size:26px;color:#1f2030;-webkit-text-stroke:0.3px #1f2030;transform:scaleX(0.9541);">Singapore</span>
<span class="t" style="left:2249.6px;top:1734.3px;font-size:26px;color:#4b5068;transform:scaleX(0.9744);">Property category</span>
<span class="t" style="left:2627.6px;top:1734.3px;font-size:26px;color:#1f2030;-webkit-text-stroke:0.3px #1f2030;transform:scaleX(0.9838);">Property</span>
<span class="t" style="left:2249.5px;top:1779.3px;font-size:26px;color:#4b5068;transform:scaleX(0.9857);">Property type</span>
<span class="t" style="left:2628.6px;top:1779.3px;font-size:26px;color:#1f2030;-webkit-text-stroke:0.3px #1f2030;transform:scaleX(0.9878);">Office Building</span>
<span class="t" style="left:2249.7px;top:1826.8px;font-size:26px;color:#4b5068;transform:scaleX(0.8940);">Lease area</span>
<span class="t" style="left:2629.6px;top:1826.8px;font-size:26px;color:#1f2030;-webkit-text-stroke:0.3px #1f2030;transform:scaleX(0.9305);">400 m</span>
<span class="t" style="left:2249.6px;top:1872.3px;font-size:26px;color:#4b5068;transform:scaleX(0.9726);">Floor</span>
<span class="t" style="left:2249.5px;top:1918.8px;font-size:26px;color:#4b5068;transform:scaleX(0.9945);">Building Number</span>
<span class="t" style="left:2698.0px;top:1823.1px;font-size:17px;color:#1f2030;font-weight:700;">2</span>
</section>
</main>
</body></html>
